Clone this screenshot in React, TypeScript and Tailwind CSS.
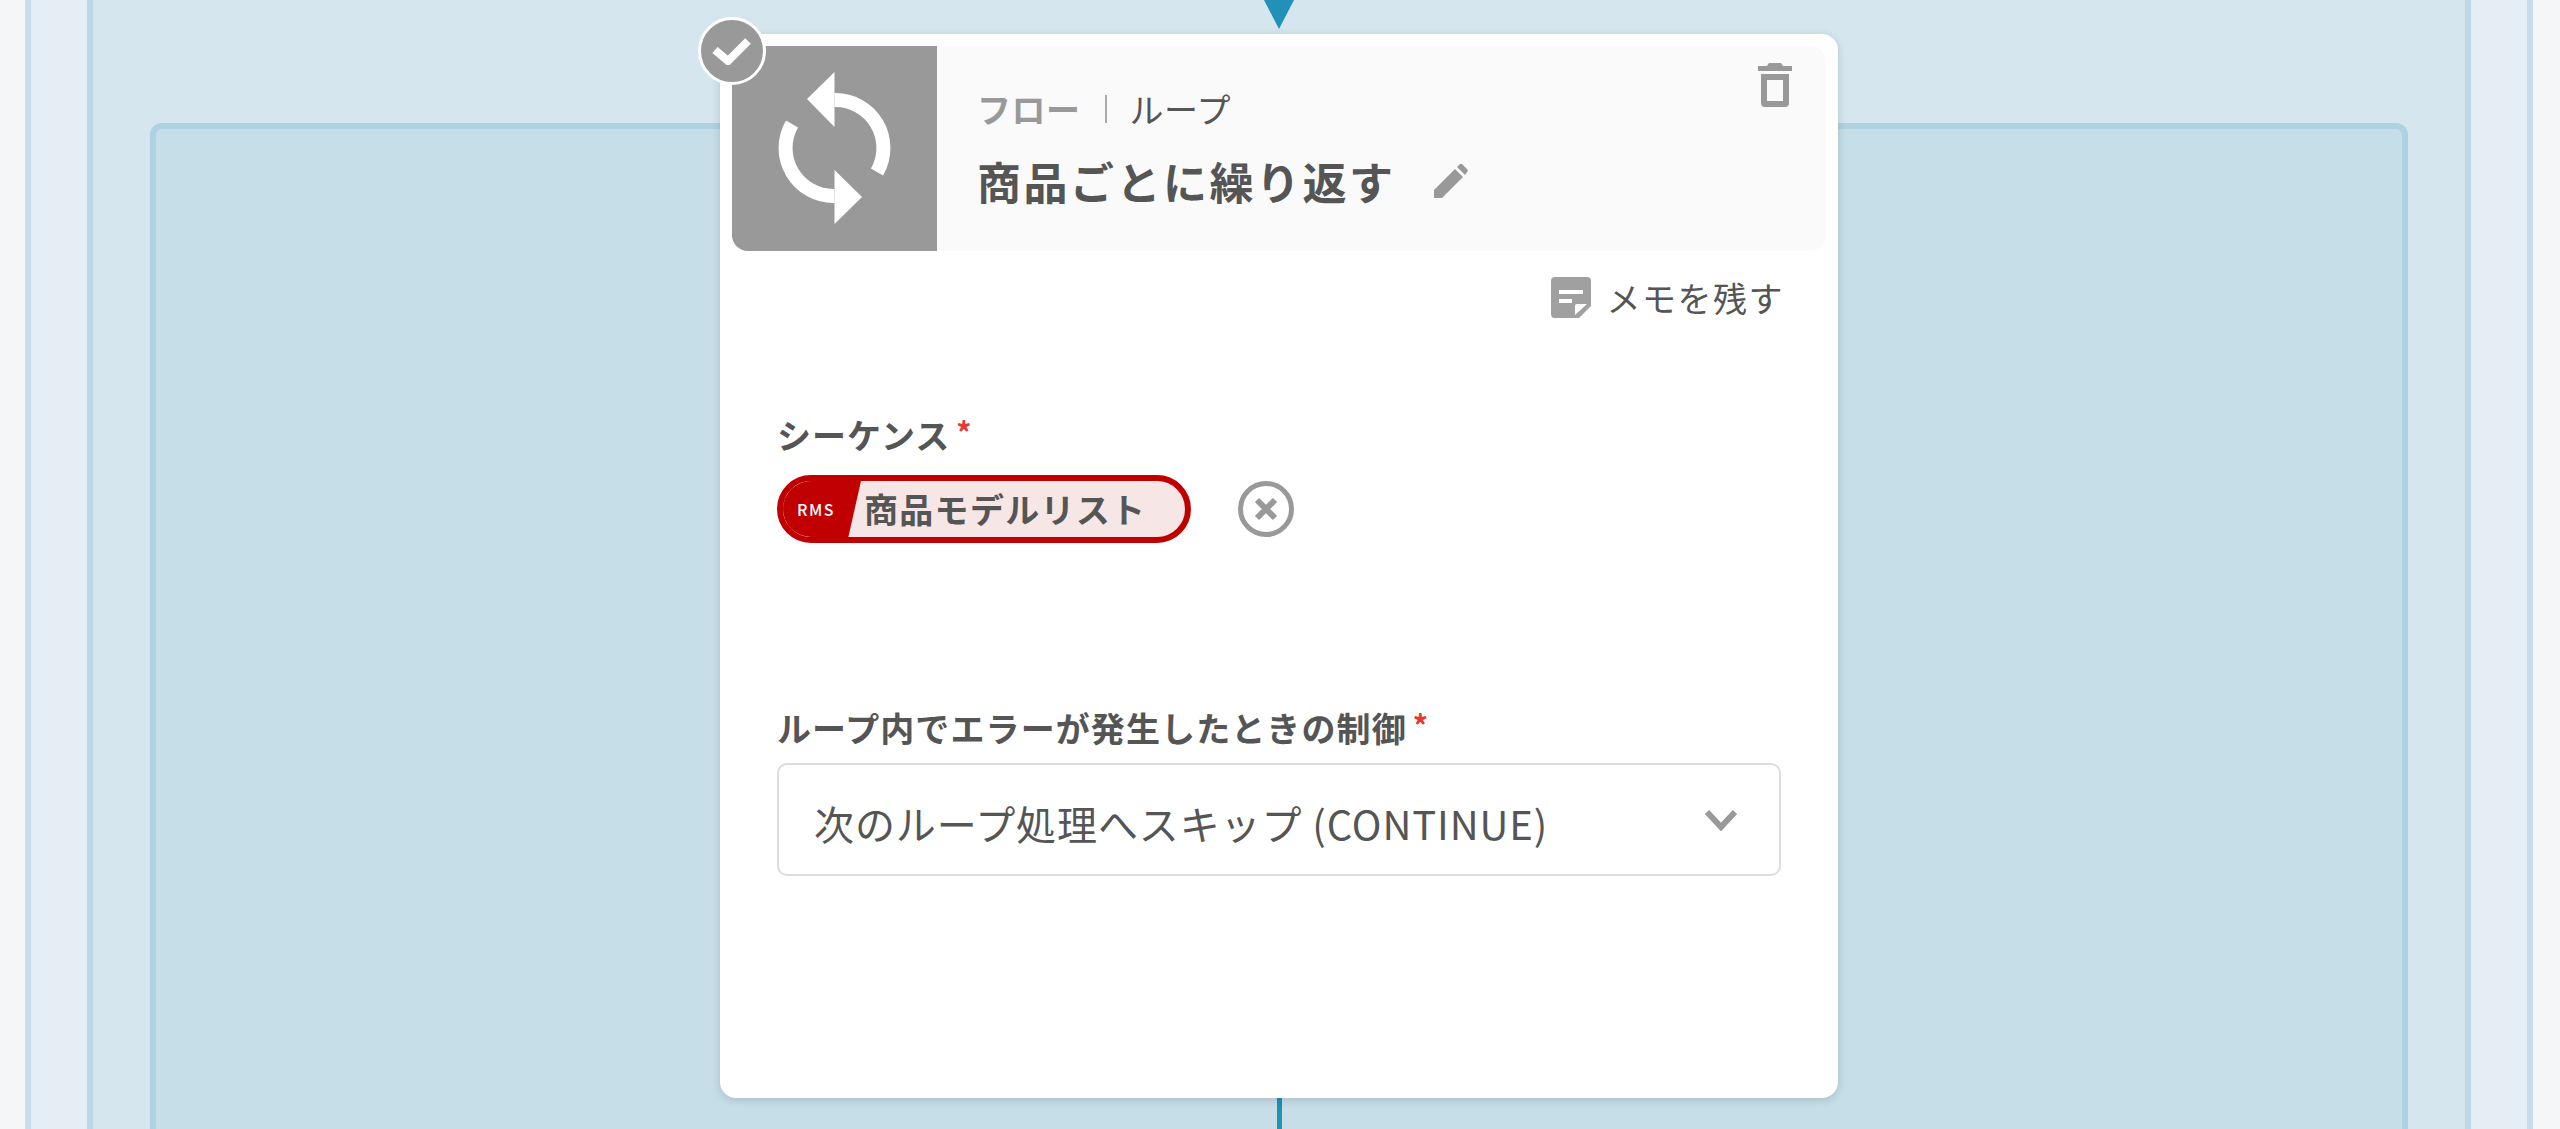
import React from 'react';

const FONT = "font-['Noto_Sans_CJK_JP','Noto_Sans',sans-serif]";

const SyncIcon = () => (
  <svg width="205" height="205" viewBox="0 0 205 205" fill="none">
    <path d="M145 126 A48 48 0 0 0 102.5 54" stroke="#fff" strokeWidth="14" />
    <path d="M60 78 A48 48 0 0 0 102.5 150" stroke="#fff" strokeWidth="14" />
    <path d="M75 53 L102.5 26 V81 Z" fill="#fff" />
    <path d="M130 151 L102.5 124 V178 Z" fill="#fff" />
  </svg>
);

const TrashIcon = () => (
  <svg width="34" height="44" viewBox="0 0 34 44" fill="#999">
    <path d="M11 0h12l2 3h9v5H0V3h9z" />
    <path fillRule="evenodd" d="M3 11h28v29a4 4 0 0 1-4 4H7a4 4 0 0 1-4-4zM9 17v21h16V17z" />
  </svg>
);

const PencilIcon = () => (
  <svg width="34" height="34" viewBox="0 0 34 34" fill="#999">
    <path d="M0 26 L21 5 L29 13 L8 34 H0 Z" />
    <path d="M23 3 L26 0 Q27 -0.5 28 0 L33.5 5.5 Q34 7 33.500 7.500 L31 11 Z" />
  </svg>
);

const MemoIcon = () => (
  <svg width="40" height="41" viewBox="0 0 40 41">
    <path d="M4 0h32a4 4 0 0 1 4 4v25L28 41H4a4 4 0 0 1-4-4V4a4 4 0 0 1 4-4z" fill="#a0a0a0" />
    <path d="M8 13h24v4H8zM8 22h13v4H8z" fill="#fff" />
    <path d="M24 38V29a2 2 0 0 1 2-2h10z" fill="#fff" />
  </svg>
);

const Required = () => <span className="relative -top-[4px] ml-[6px] text-[30px] leading-none font-bold text-[#e53935]">*</span>;

export default function App() {
  return (
    <div className={`h-[1129px] overflow-hidden bg-[#f5f6f8] pl-[25px] pr-[27px] ${FONT}`}>
      <div className="h-full border-x-[6px] border-x-[#c6dee9] bg-[#e6eef5] px-[56px]">
        <div className="relative h-full border-x-[6px] border-x-[#b9d9e6] bg-[#d5e6ee] px-[57px] pt-[123px]">
          {/* connector arrow */}
          <svg className="absolute top-0 left-1/2 -translate-x-1/2" width="30" height="29" viewBox="0 0 30 29">
            <path d="M0 0 H30 L15 29 Z" fill="#2390b8" />
          </svg>

          <div className="h-[1100px] rounded-[12px] border-[6px] border-[#add3e2] bg-[#c6dee8]">
            <div className="relative mx-auto -mt-[95px] h-[1064px] w-[1118px] rounded-[16px] bg-white p-[12px] shadow-[0_2px_10px_rgba(0,0,0,0.15)]">
              {/* completed badge */}
              <div className="absolute -top-[17px] -left-[22px] z-10 flex h-[68px] w-[68px] items-center justify-center rounded-full border-[3px] border-white bg-[#999]">
                <svg width="40" height="28" viewBox="0 0 40 28" fill="none">
                  <path d="M3 13 L16 24 L36 4" stroke="#fff" strokeWidth="8" />
                </svg>
              </div>

              {/* header */}
              <div className="relative flex h-[205px] overflow-hidden rounded-[16px] bg-[#fafafa]">
                <div className="h-[205px] w-[205px] shrink-0 bg-[#999]">
                  <SyncIcon />
                </div>
                <div className="pl-[40px] pt-[39px]">
                  <div className="flex items-center text-[34px] leading-[48px] tracking-[0.5px]">
                    <span className="font-bold text-[#999]">フロー</span>
                    <span className="mx-[24px] mr-[23px] h-[28px] w-[2px] bg-[#aaa]" />
                    <span className="text-[#555]">ループ</span>
                  </div>
                  <div className="mt-[18px] flex items-center">
                    <span className="text-[44px] leading-[60px] font-bold tracking-[2.5px] text-[#555]">商品ごとに繰り返す</span>
                    <span className="ml-[38px]"><PencilIcon /></span>
                  </div>
                </div>
                <div className="absolute top-[17px] right-[34px]">
                  <TrashIcon />
                </div>
              </div>

              {/* memo */}
              <div className="mt-[26px] mr-[42px] flex items-center justify-end">
                <MemoIcon />
                <span className="ml-[16px] text-[34px] leading-[41px] tracking-[1.5px] text-[#555]">メモを残す</span>
              </div>

              {/* form */}
              <div className="px-[45px] pt-[92px]">
                <div className="flex items-center text-[34px] leading-[50px] font-bold tracking-[1px] text-[#555]">
                  シーケンス<Required />
                </div>
                <div className="mt-[15px] flex items-center">
                  <div className="relative flex h-[68px] w-[414px] items-center overflow-hidden rounded-full border-[6px] border-[#c00000] bg-[#f7e6e6]">
                    <div className="absolute inset-y-0 -left-[1px] flex w-[79px] items-center bg-[#c00000] [clip-path:polygon(0_0,100%_0,84%_100%,0_100%)] pl-[15px] text-[16px] font-medium tracking-[1.5px] text-white">
                      RMS
                    </div>
                    <span className="ml-[81px] text-[34px] leading-none font-bold tracking-[1.3px] whitespace-nowrap text-[#555]">商品モデルリスト</span>
                  </div>
                  <svg className="ml-[47px]" width="56" height="56" viewBox="0 0 56 56" fill="none" stroke="#999">
                    <circle cx="28" cy="28" r="25.500" strokeWidth="5" />
                    <path d="M19 19 L37 37 M37 19 L19 37" strokeWidth="6" />
                  </svg>
                </div>

                <div className="mt-[160px] flex items-center text-[34px] leading-[50px] font-bold tracking-[1.1px] text-[#555]">
                  ループ内でエラーが発生したときの制御<Required />
                </div>
                <div className="mt-[10px] flex h-[113px] w-[1004px] items-center justify-between rounded-[10px] border-2 border-[#ddd] bg-white pl-[35px] pr-[41px]">
                  <span className="relative top-[3px] text-[40px] tracking-[0.9px] text-[#555]">次のループ処理へスキップ (CONTINUE)</span>
                  <svg width="34" height="22" viewBox="0 0 34 22" fill="none">
                    <path d="M3 3 L17 18 L31 3" stroke="#999" strokeWidth="6" />
                  </svg>
                </div>
              </div>
            </div>
            {/* connector line */}
            <div className="mx-auto h-[40px] w-[5px] bg-[#2390b8]" />
          </div>
        </div>
      </div>
    </div>
  );
}
